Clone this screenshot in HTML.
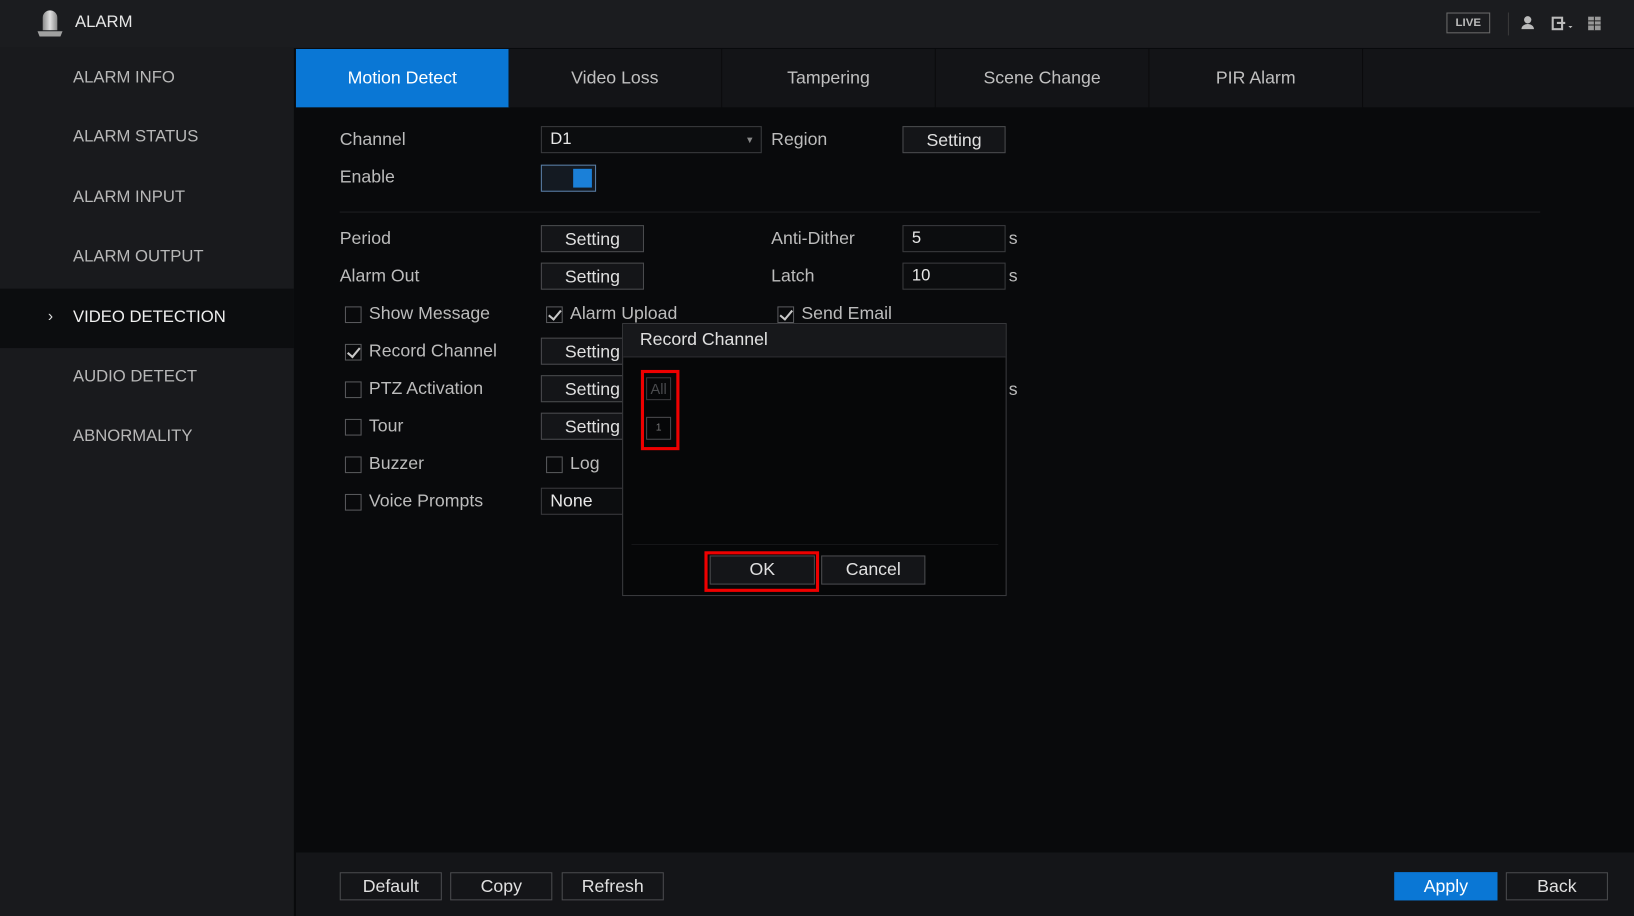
<!DOCTYPE html>
<html><head><meta charset="utf-8"><style>
html,body{margin:0;padding:0;background:#0b0c0e;overflow:hidden;width:1634px;height:916px}
#w{position:absolute;left:0;top:0;width:1568px;height:879px;transform:scale(1.04209,1.04209);transform-origin:0 0;font-family:"Liberation Sans","DejaVu Sans",sans-serif;color:#c8c8c8;background:#090a0c}
.a{position:absolute}
.top{left:0;top:0;width:1568px;height:46px;background:#1b1c1f}
.side{left:0;top:46px;width:282px;height:833px;background:#191a1d}
.si{position:absolute;left:70px;font-size:16px;color:#b8b8b8}
.tabs{left:284px;top:47px;width:1284px;height:56px;background:#131417}
.tab{position:absolute;top:0;height:56px;width:204px;text-align:center;line-height:56px;font-size:17px;color:#c0c0c0;border-right:1px solid #0b0b0d}
.lbl{position:absolute;font-size:17px;color:#bcbcbc}
.btn{position:absolute;height:26px;border:1px solid #4a4b4e;background:#141518;color:#e0e0e0;font-size:17px;text-align:center;line-height:26px;box-sizing:border-box}
.inp{position:absolute;height:26px;border:1px solid #3a3b3e;background:#0c0d0f;color:#e8e8e8;font-size:16px;line-height:24px;padding-left:8px;box-sizing:border-box}
.cb{position:absolute;width:16px;height:16px;border:1px solid #58595c;box-sizing:border-box}
.cb.on::after{content:"";position:absolute;left:4px;top:0px;width:5px;height:10px;border:solid #c8c8c8;border-width:0 2px 2px 0;transform:rotate(40deg)}
.bottom{left:284px;top:818px;width:1284px;height:61px;background:#141518}
</style></head><body><div id="w">
<div class="a top"></div>
<svg class="a" style="left:33px;top:7px" width="30" height="30" viewBox="0 0 30 30"><defs><linearGradient id="g" x1="0" x2="1"><stop offset="0" stop-color="#8a8a8a"/><stop offset=".5" stop-color="#e0e0e0"/><stop offset="1" stop-color="#8a8a8a"/></linearGradient></defs><path d="M8 22 V10 a7 7 0 0 1 14 0 V22Z" fill="url(#g)"/><path d="M3 23 h24 l-2 5 h-20z" fill="#a0a0a0"/></svg>
<div class="a" style="left:72px;top:13px;font-size:16px;color:#e6e6e6">ALARM</div>
<div class="a" style="left:1388px;top:12px;width:40px;height:18px;border:1px solid #6a6a6a;font-size:11px;line-height:18px;text-align:center;color:#bbb;font-weight:bold">LIVE</div>
<div class="a" style="left:1447px;top:12px;width:1px;height:22px;background:#3a3a3a"></div>
<svg class="a" style="left:1458px;top:14px" width="80" height="18"><circle cx="8" cy="5" r="3.5" fill="#bbb"/><path d="M2 14 a6 5 0 0 1 12 0z" fill="#bbb"/><rect x="32" y="3" width="9" height="11" fill="none" stroke="#bbb" stroke-width="2"/><path d="M36 8h8" stroke="#bbb" stroke-width="2"/><path d="M47 11l2 2 2-2z" fill="#bbb"/><rect x="66" y="2" width="12" height="13" fill="#999"/><path d="M66 6h12M66 10h12M72 2v13" stroke="#222"/></svg>
<div class="a side"></div>
<div class="a" style="left:0;top:277px;width:282px;height:57px;background:#0c0d0f"></div>
<div class="si" style="top:66px">ALARM INFO</div>
<div class="si" style="top:123px">ALARM STATUS</div>
<div class="si" style="top:181px">ALARM INPUT</div>
<div class="si" style="top:238px">ALARM OUTPUT</div>
<div class="a" style="left:46px;top:295px;font-size:15px;color:#ddd">›</div>
<div class="si" style="top:296px;color:#f0f0f0">VIDEO DETECTION</div>
<div class="si" style="top:353px">AUDIO DETECT</div>
<div class="si" style="top:410px">ABNORMALITY</div>
<div class="a tabs"></div>
<div class="tab" style="left:284px;top:47px;background:#0a77d5;color:#fff">Motion Detect</div>
<div class="tab" style="left:488px;top:47px">Video Loss</div>
<div class="tab" style="left:693px;top:47px">Tampering</div>
<div class="tab" style="left:898px;top:47px">Scene Change</div>
<div class="tab" style="left:1103px;top:47px">PIR Alarm</div>
<div class="lbl" style="left:326px;top:124px">Channel</div>
<div class="inp" style="left:519px;top:121px;width:212px">D1<span style="position:absolute;right:6px;top:0;font-size:9px;color:#888">▼</span></div>
<div class="lbl" style="left:740px;top:124px">Region</div>
<div class="btn" style="left:866px;top:121px;width:99px">Setting</div>
<div class="lbl" style="left:326px;top:160px">Enable</div>
<div class="a" style="left:519px;top:158px;width:53px;height:26px;border:1px solid #5a7fa8;box-sizing:border-box;background:#141a22"><div style="position:absolute;right:3px;top:3px;width:18px;height:18px;background:#1b80d8"></div></div>
<div class="a" style="left:326px;top:203px;width:1152px;height:1px;background:#1e1f22"></div>
<div class="lbl" style="left:326px;top:219px">Period</div>
<div class="btn" style="left:519px;top:216px;width:99px">Setting</div>
<div class="lbl" style="left:740px;top:219px">Anti-Dither</div>
<div class="inp" style="left:866px;top:216px;width:99px">5</div>
<div class="lbl" style="left:968px;top:219px">s</div>
<div class="lbl" style="left:326px;top:255px">Alarm Out</div>
<div class="btn" style="left:519px;top:252px;width:99px">Setting</div>
<div class="lbl" style="left:740px;top:255px">Latch</div>
<div class="inp" style="left:866px;top:252px;width:99px">10</div>
<div class="lbl" style="left:968px;top:255px">s</div>
<div class="cb" style="left:331px;top:294px"></div><div class="lbl" style="left:354px;top:291px">Show Message</div>
<div class="cb on" style="left:524px;top:294px"></div><div class="lbl" style="left:547px;top:291px">Alarm Upload</div>
<div class="cb on" style="left:746px;top:294px"></div><div class="lbl" style="left:769px;top:291px">Send Email</div>
<div class="cb on" style="left:331px;top:330px"></div><div class="lbl" style="left:354px;top:327px">Record Channel</div>
<div class="btn" style="left:519px;top:324px;width:99px">Setting</div>
<div class="cb" style="left:331px;top:366px"></div><div class="lbl" style="left:354px;top:363px">PTZ Activation</div>
<div class="btn" style="left:519px;top:360px;width:99px">Setting</div>
<div class="lbl" style="left:968px;top:364px">s</div>
<div class="cb" style="left:331px;top:402px"></div><div class="lbl" style="left:354px;top:399px">Tour</div>
<div class="btn" style="left:519px;top:396px;width:99px">Setting</div>
<div class="cb" style="left:331px;top:438px"></div><div class="lbl" style="left:354px;top:435px">Buzzer</div>
<div class="cb" style="left:524px;top:438px"></div><div class="lbl" style="left:547px;top:435px">Log</div>
<div class="cb" style="left:331px;top:474px"></div><div class="lbl" style="left:354px;top:471px">Voice Prompts</div>
<div class="inp" style="left:519px;top:468px;width:99px;font-size:17px">None</div>
<div class="a" style="left:597px;top:310px;width:369px;height:262px;background:#060708;border:1px solid #3a3b3e;box-sizing:border-box"></div>
<div class="a" style="left:598px;top:311px;width:367px;height:31px;background:#17181b;border-bottom:1px solid #2c2d30"></div>
<div class="lbl" style="left:614px;top:316px;color:#e0e0e0">Record Channel</div>
<div class="a" style="left:620px;top:362px;width:24px;height:22px;border:1px solid #3a3b3e;box-sizing:border-box;font-size:14px;color:#4a4b4e;text-align:center;line-height:20px">All</div>
<div class="a" style="left:620px;top:400px;width:24px;height:22px;border:1px solid #4a4b4e;box-sizing:border-box;font-size:10px;color:#777;text-align:center;line-height:20px">1</div>
<div class="a" style="left:615px;top:355px;width:37px;height:77px;border:3px solid #e00;box-sizing:border-box"></div>
<div class="a" style="left:606px;top:522px;width:352px;height:1px;background:#151618"></div>
<div class="btn" style="left:681px;top:533px;width:101px;height:28px;line-height:26px">OK</div>
<div class="a" style="left:676px;top:529px;width:110px;height:39px;border:3px solid #e00;box-sizing:border-box"></div>
<div class="btn" style="left:788px;top:533px;width:100px;height:28px;line-height:26px">Cancel</div>
<div class="a bottom"></div>
<div class="btn" style="left:326px;top:837px;width:98px;height:27px">Default</div>
<div class="btn" style="left:432px;top:837px;width:98px;height:27px">Copy</div>
<div class="btn" style="left:539px;top:837px;width:98px;height:27px">Refresh</div>
<div class="btn" style="left:1338px;top:837px;width:99px;height:27px;background:#0a77d5;border-color:#0a77d5;color:#fff">Apply</div>
<div class="btn" style="left:1445px;top:837px;width:98px;height:27px">Back</div>
</div></body></html>
